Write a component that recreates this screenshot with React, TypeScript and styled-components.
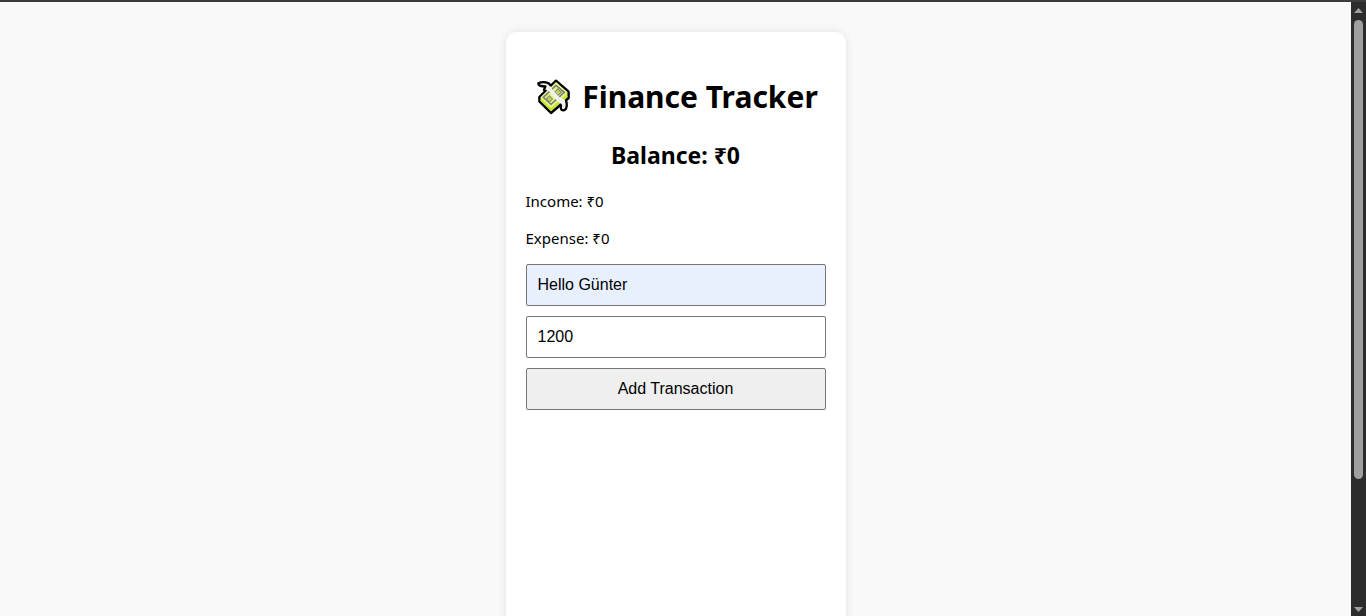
import React, { useState } from "react";
import styled, { createGlobalStyle } from "styled-components";

const GlobalStyle = createGlobalStyle`
  * { box-sizing: border-box; }
  body {
    margin: 0;
    overflow: hidden;
    background: #f9f9f9;
    color: #000;
    font-family: "Segoe UI", "Noto Sans", sans-serif;
  }
`;

const Shell = styled.div`
  display: flex;
  height: 100vh;
  border-top: 2px solid #3c3c3c;
`;

const Page = styled.main`
  flex: 1;
  display: flex;
  justify-content: center;
  overflow: hidden;
  padding-top: 30px;
`;

const Card = styled.section`
  width: 340px;
  min-height: 100vh;
  padding: 20px;
  background: #fff;
  border-radius: 10px;
  box-shadow: 0 0 10px rgba(0, 0, 0, 0.1);
`;

const Title = styled.h1`
  display: flex;
  align-items: center;
  justify-content: center;
  gap: 12px;
  margin: 24px 0 20px;
  padding-left: 4px;
  font-size: 30px;
  line-height: 42px;
  white-space: nowrap;
`;

const Balance = styled.h2`
  margin: 0 0 18px;
  font-size: 23px;
  line-height: 34px;
  text-align: center;
`;

const Summary = styled.p`
  margin: 0 0 14px;
  font-size: 15px;
  line-height: 23px;
`;

const Form = styled.form`
  display: flex;
  flex-direction: column;
  gap: 10px;
`;

const Field = styled.input<{ $filled?: boolean }>`
  width: 100%;
  height: 42px;
  padding: 10px 11px;
  border: 1px solid #767676;
  border-radius: 2px;
  background: ${(p) => (p.$filled ? "#e8f0fe" : "#fff")};
  color: #000;
  font: 16px/20px "Liberation Sans", Arial, sans-serif;
`;

const SubmitButton = styled.button`
  width: 100%;
  height: 42px;
  padding: 10px;
  border: 1px solid #767676;
  border-radius: 2px;
  background: #efefef;
  color: #000;
  font: 16px/20px "Liberation Sans", Arial, sans-serif;
`;

const ScrollTrack = styled.div`
  display: flex;
  flex-direction: column;
  align-items: center;
  width: 15px;
  padding: 6px 0 4px;
  background: #2c2c2c;
`;

const ScrollThumb = styled.div`
  width: 9px;
  height: 76%;
  margin: 7px 0 auto;
  border-radius: 5px;
  background: #9f9f9f;
`;

const MoneyIcon = () => (
  <svg width="33" height="36" viewBox="27 27 99 108" aria-hidden="true">
    <path d="M84 32L122 65V84L69 129L34 94V81Z" fill="#d9ee4c" stroke="#000" strokeWidth="7" strokeLinejoin="round" />
    <path d="M84 37L118 67L69 112L38 82Z" fill="#edf8a6" />
    <path d="M84 46L109 67L69 103L46 82Z" fill="#e6f58e" stroke="#80836c" strokeWidth="5" />
    <path d="M89 57L100 67L90 76L80 67ZM64 78L73 87L65 95L55 86Z" fill="#e0f06c" stroke="#8c9470" strokeWidth="4" />
    <circle cx="90" cy="67" r="3" fill="#a9c51d" />
    <circle cx="64" cy="86" r="3" fill="#a9c51d" />
    <path d="M38 90L69 119L118 78" fill="none" stroke="#bddd29" strokeWidth="4" />
    <path d="M31 38Q46 33 62 40Q69 47 74 60L94 81L113 90Q117 99 116 109Q114 121 105 121Q97 121 99 108Q99 100 87 92L66 66L49 57L51 49Q30 49 31 38Z" fill="#f2f2f2" />
    <path d="M48 60L52 49Q30 49 31 40Q46 33 62 40L68 46M114 92Q117 98 116 109Q114 121 105 121Q97 121 99 108L98 104" fill="none" stroke="#000" strokeWidth="7" strokeLinecap="round" strokeLinejoin="round" />
  </svg>
);

const ArrowIcon = ({ down = false }: { down?: boolean }) => (
  <svg width="9" height="5" viewBox="0 0 9 5" aria-hidden="true">
    <path d={down ? "M0 0H9L4.500 5Z" : "M0 5H9L4.500 0Z"} fill="#9f9f9f" />
  </svg>
);

export default function App() {
  const [description, setDescription] = useState("Hello Günter");
  const [amount, setAmount] = useState("1200");

  return (
    <>
      <GlobalStyle />
      <Shell>
        <Page>
          <Card>
            <Title><MoneyIcon />Finance Tracker</Title>
            <Balance>Balance: ₹0</Balance>
            <Summary>Income: ₹0</Summary>
            <Summary>Expense: ₹0</Summary>
            <Form onSubmit={(event) => event.preventDefault()}>
              <Field $filled aria-label="Description" value={description} onChange={(e) => setDescription(e.target.value)} />
              <Field aria-label="Amount" inputMode="numeric" value={amount} onChange={(e) => setAmount(e.target.value)} />
              <SubmitButton type="submit">Add Transaction</SubmitButton>
            </Form>
          </Card>
        </Page>
        <ScrollTrack aria-hidden="true">
          <ArrowIcon />
          <ScrollThumb />
          <ArrowIcon down />
        </ScrollTrack>
      </Shell>
    </>
  );
}
